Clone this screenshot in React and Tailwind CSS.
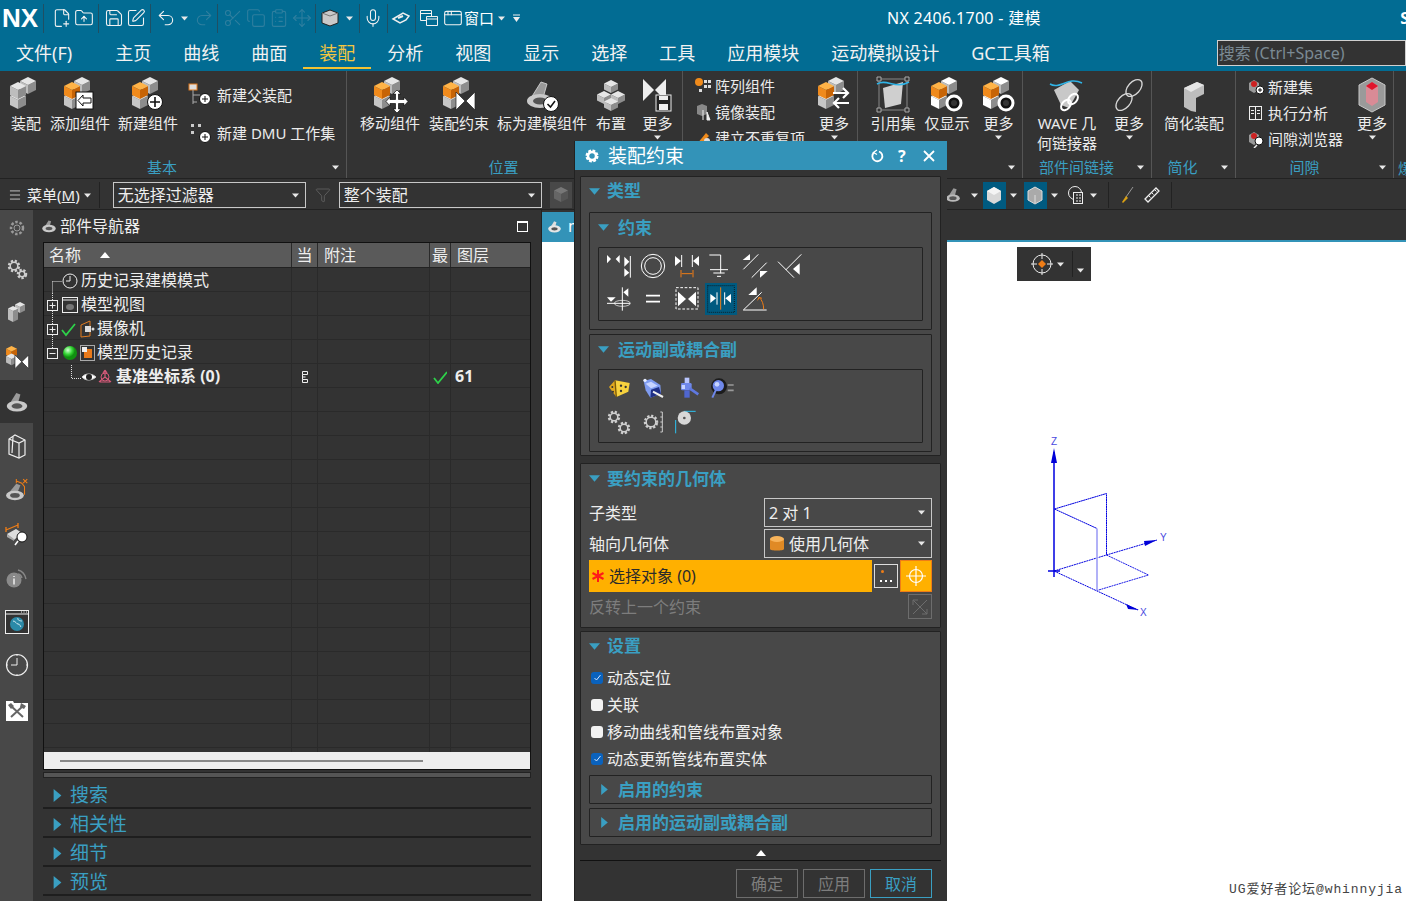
import React from 'react';
import { FilePlus2, FolderUp, Save, SquarePen, Undo2, Redo2, Scissors, Copy, ClipboardList, Move, Mic, AppWindow, Menu, Filter } from 'lucide-react';

const Tri = ({ dir = 'down', size = 10, color = '#3a9fc2', className = '' }) => (
  <svg width={size} height={size} viewBox="0 0 10 10" className={className}>
    <polygon fill={color} points={dir === 'down' ? '0,2 10,2 5,8' : dir === 'up' ? '0,8 10,8 5,2' : '2,0 8,5 2,10'} />
  </svg>
);

const Arrow = ({ className = '' }) => <Tri size={7} color="#e8e8e8" className={className} />;

const Sep = ({ className = '' }) => <div className={`w-px h-[29px] bg-[#1f4f63] ${className}`} />;

// isometric cube, x/y = left corner of top face
const Cube = ({ x, y, s = 8, h = 9, t = '#e6e6e6', l = '#bdbdbd', r = '#8d8d8d' }) => (
  <g>
    <polygon fill={l} points={`${x},${y + s / 2} ${x + s},${y + s} ${x + s},${y + s + h} ${x},${y + s / 2 + h}`} />
    <polygon fill={r} points={`${x + s},${y + s} ${x + 2 * s},${y + s / 2} ${x + 2 * s},${y + s / 2 + h} ${x + s},${y + s + h}`} />
    <polygon fill={t} points={`${x},${y + s / 2} ${x + s},${y} ${x + 2 * s},${y + s / 2} ${x + s},${y + s}`} />
  </g>
);

const Badge = ({ type }) => {
  if (type === 'plus') return <g><circle cx="26" cy="26" r="7.5" fill="#fff" stroke="#111" /><path d="M21 26h10M26 21v10" stroke="#111" strokeWidth="1.6" /></g>;
  if (type === 'add') return <g><rect x="15" y="16" width="17" height="17" fill="#fff" stroke="#111" /><path d="M30 22h-8v-3l-5 5.500 5 5.500v-3h8z" fill="#fff" stroke="#111" /></g>;
  if (type === 'move') return <path d="M26 14l4 4h-2.500v5.500H33V21l4 4.500-4 4.500v-2.500h-5.500V33H30l-4 4-4-4h2.500v-5.500H19V30l-4-4.500 4-4.500v2.500h5.500V18H22z" fill="#fff" stroke="#111" strokeWidth=".7" />;
  if (type === 'bow') return <g fill="#fff" stroke="#222" strokeWidth=".7"><polygon points="16,16 25,25 16,34" /><polygon points="35,16 26,25 35,34" /></g>;
  if (type === 'swap') return <g fill="none" stroke="#fff" strokeWidth="2.200"><path d="M18 17h15m-5-5 5 5-5 5" /><path d="M34 27H19m5-5-5 5 5 5" /></g>;
  if (type === 'ring') return <g><circle cx="26" cy="27" r="7" fill="#111" stroke="#fff" strokeWidth="3" /><circle cx="26" cy="27" r="3" fill="#333" /></g>;
  return null;
};

const Blocks = ({ orange = false, badge, white = false }) => (
  <svg width="38" height="38" viewBox="0 0 38 38">
    <Cube x={13} y={1} t={white ? '#fff' : '#e6e6e6'} />
    <Cube x={3} y={16} t={white ? '#fff' : '#e6e6e6'} l={white ? '#fff' : '#c6c6c6'} />
    {orange ? <Cube x={3} y={6} t="#ffb347" l="#f08a1c" r="#c76406" /> : <Cube x={3} y={6} />}
    <Badge type={badge} />
  </svg>
);

const Bowl = ({ check }) => (
  <svg width="38" height="38" viewBox="0 0 38 38">
    <path d="M8 22 18 6l6 2-4 14z" fill="#9a9a9a" stroke="#ddd" strokeWidth=".8" />
    <ellipse cx="17" cy="25" rx="13" ry="7" fill="#c9c9c9" />
    <ellipse cx="17" cy="25" rx="7" ry="3.500" fill="#555" />
    {check && <g><circle cx="28" cy="28" r="7.500" fill="#fff" stroke="#111" /><path d="M24.500 28l3 3 4.500-6" fill="none" stroke="#111" strokeWidth="1.500" /></g>}
  </svg>
);

const RibbonBtn = ({ icon, label, more, className = '' }) => (
  <div className={`flex flex-col items-center shrink-0 ${className}`}>
    <div className="h-[38px] flex items-center justify-center">{icon}</div>
    <div className="-mt-[1px] text-[15px] leading-[20px] whitespace-pre text-center text-[#ececec]">{label}</div>
    {more && <Arrow className="mt-[1px]" />}
  </div>
);

const MoreBtn = ({ icon, className }) => <RibbonBtn icon={icon} label="更多" more className={className} />;

const RibbonGroup = ({ label, labelClass = '', arrow = true, className = '', children }) => (
  <div className={`relative shrink-0 h-full border-r border-[#555] flex flex-col ${className}`}>
    <div className="flex h-[86px] pt-[5px]">{children}</div>
    <div className="flex items-center h-[20px]">
      <div className={`flex-1 text-center text-[15px] leading-[20px] text-[#3a9fc2] ${labelClass}`}>{label}</div>
      {arrow && <Arrow className="mr-[7px]" />}
    </div>
  </div>
);

const ListRow = ({ icon, label, className = '', iconClass = 'w-[18px] h-[18px]' }) => (
  <div className={`flex items-center gap-[3px] text-[15px] leading-[20px] whitespace-nowrap text-[#ececec] ${className}`}>
    <div className={`flex items-center justify-center shrink-0 ${iconClass}`}>{icon}</div>
    {label}
  </div>
);

const Mini = ({ children, w = 18, h = 18 }) => <svg width={w} height={h} viewBox={`0 0 ${w} ${h}`}>{children}</svg>;

const Gear = ({ cx, cy, r = 5, c = '#cfcfcf' }) => (
  <g>
    <circle cx={cx} cy={cy} r={r} fill="none" stroke={c} strokeWidth="2.500" strokeDasharray="2.200 1.600" transform={`rotate(10 ${cx} ${cy})`} />
    <circle cx={cx} cy={cy} r={r - 1.200} fill="none" stroke={c} strokeWidth="1.500" />
  </g>
);

// constraint icons, drawn in 3x coordinates around each cell's centre
const Con = ({ cx, cy, children, selected }) => (
  <div className={`w-[32px] h-[32px] shrink-0 ${selected ? 'bg-[#005a80]' : ''}`}>
    <svg width="32" height="32" viewBox={`${cx - 48} ${cy - 48} 96 96`} fill="none" stroke="#fff" strokeWidth="3">{children}</svg>
  </div>
);

const W = { fill: '#fff', stroke: 'none' };

const SectionTitle = ({ label, dir = 'down', className = '', gap = 'ml-[7px]' }) => (
  <div className={`flex items-center ${className}`}>
    <Tri dir={dir} size={11} />
    <span className={`${gap} text-[17px] leading-[22px] font-bold text-[#3a9fc2] whitespace-nowrap`}>{label}</span>
  </div>
);

const Panel = ({ className = '', children }) => <div className={`bg-[#484848] border border-[#222] rounded-[1px] ${className}`}>{children}</div>;

const Select = ({ icon, value, className = '' }) => (
  <div className={`flex items-center border border-[#c8c8c8] pl-[4px] pr-[6px] text-[16px] leading-[22px] text-[#eee] ${className}`}>
    {icon}
    <span className="flex-1 whitespace-nowrap">{value}</span>
    <Arrow />
  </div>
);

const Check = ({ checked, label }) => (
  <div className="flex items-center h-[27px] pl-[10px] text-[16px] leading-[22px] text-[#eee]">
    {checked ? (
      <div className="w-[12px] h-[12px] rounded-[3px] bg-[#0a62bd] flex items-center justify-center">
        <svg width="9" height="9" viewBox="0 0 9 9"><path d="M1.500 5l2 2 4-5" fill="none" stroke="#cfe3ff" strokeWidth="1" /></svg>
      </div>
    ) : (
      <div className="w-[12px] h-[12px] rounded-[3px] bg-[#f2f2f2]" />
    )}
    <span className="ml-[4px]">{label}</span>
  </div>
);

const DialogBtn = ({ label, active }) => (
  <div className={`w-[62px] h-[29px] border flex items-center justify-center text-[16px] leading-[22px] ${active ? 'border-[#3a9fc2] text-[#3a9fc2]' : 'border-[#6d6d6d] text-[#7d7d7d]'}`}>{label}</div>
);

const Dash = ({ d }) => <path d={d} stroke="#ddd" strokeDasharray="1 1" fill="none" />;

const Box = ({ plus }) => (
  <g>
    <rect x="4.500" y="7.500" width="10" height="10" fill="#333" stroke="#eee" />
    <path d="M6.500 12.500h6" stroke="#eee" />
    {plus && <path d="M9.500 9.500v6" stroke="#eee" />}
  </g>
);

const GreenCheck = ({ x = 0, y = 0 }) => <path d={`M${x} ${y + 6}l4 5 9-11`} fill="none" stroke="#2ed14a" strokeWidth="1.800" />;

const Row = ({ icon, w, label, bold, note, tick, layer }) => (
  <div className="flex h-[24px] shrink-0 border-b border-[#2a2a2a] text-[16px] leading-[25px] text-[#eee]">
    <div className={`w-[248px] shrink-0 border-r border-[#2a2a2a] pt-[2px] flex items-center whitespace-nowrap ${bold ? 'font-bold' : ''}`}>
      {icon && <svg width={w} height="24" viewBox={`1 0 ${w} 24`} className="shrink-0">{icon}</svg>}
      <span className={icon ? '' : 'hidden'}>{label}</span>
    </div>
    <div className="w-[26px] shrink-0 border-r border-[#2a2a2a] pt-[2px] flex items-center justify-center">{note}</div>
    <div className="w-[112px] shrink-0 border-r border-[#2a2a2a]" />
    <div className="w-[21px] shrink-0 border-r border-[#2a2a2a] pt-[2px] flex items-center justify-center">{tick && <svg width="14" height="14" viewBox="0 0 14 14"><GreenCheck x={1} y={2} /></svg>}</div>
    <div className="flex-1 pl-[4px] font-bold">{layer}</div>
  </div>
);

const Side = ({ children, className = 'h-[44px]' }) => <div className={`shrink-0 flex items-center justify-center ${className}`}>{children}</div>;

const FootRow = ({ label }) => (
  <div className="flex items-center h-[29px] pt-[3px] border-b-2 border-[#1e1e1e] pl-[8px]">
    <Tri dir="right" size={13} />
    <span className="ml-[6px] text-[19px] leading-[24px] text-[#3a9fc2]">{label}</span>
  </div>
);

export default function App() {
  const tbIcon = { size: 20, strokeWidth: 1.3 };
  const tbDim = { size: 20, strokeWidth: 1.3 };

  return (
    <div className="relative w-[1406px] h-[901px] overflow-hidden flex flex-col bg-[#333] font-['Noto_Sans','Noto_Sans_CJK_SC',sans-serif]">
      {/* title bar */}
      <div className="h-[36px] shrink-0 bg-[#026c93] flex items-center text-white">
        <div className="w-[43px] pl-[2px] text-[26px] leading-[36px] font-bold font-['Liberation_Sans',sans-serif]">NX</div>
        <Sep />
        <FilePlus2 {...tbIcon} className="ml-[8px] text-[#f2f2f2] shrink-0" />
        <FolderUp {...tbIcon} className="ml-[2px] text-[#f2f2f2] shrink-0" />
        <Sep className="ml-[4px]" />
        <Save {...tbIcon} className="ml-[5px] text-[#f2f2f2] shrink-0" />
        <SquarePen {...tbIcon} className="ml-[2px] text-[#f2f2f2] shrink-0" />
        <Sep className="ml-[4px]" />
        <Undo2 {...tbIcon} className="ml-[5px] text-[#f2f2f2] shrink-0" />
        <Arrow className="ml-[5px]" />
        <Redo2 {...tbDim} className="ml-[6px] text-[#2f7f9f] shrink-0" />
        <Sep className="ml-[3px]" />
        <Scissors {...tbDim} className="ml-[5px] text-[#2f7f9f] shrink-0" />
        <Copy {...tbDim} className="ml-[3px] text-[#2f7f9f] shrink-0" />
        <ClipboardList {...tbDim} className="ml-[3px] text-[#2f7f9f] shrink-0" />
        <Move {...tbDim} className="ml-[3px] text-[#2f7f9f] shrink-0" />
        <Sep className="ml-[3px]" />
        <svg width="20" height="20" viewBox="0 0 20 20" className="ml-[4px] shrink-0">
          <path d="M2 5 10 2l8 3v10l-8 3-8-3z" fill="#c9c9c9" stroke="#222" />
          <path d="M2 5l8 3 8-3" fill="none" stroke="#777" />
        </svg>
        <Arrow className="ml-[6px]" />
        <Sep className="ml-[6px]" />
        <Mic {...tbIcon} className="ml-[3px] text-[#f2f2f2] shrink-0" />
        <Sep className="ml-[4px]" />
        <svg width="20" height="20" viewBox="0 0 20 20" className="ml-[3px] shrink-0">
          <path d="M2 11 12 5l6 3-3 4-6 3z" fill="none" stroke="#eee" strokeWidth="1.500" />
          <path d="M7 10l5-2" stroke="#eee" strokeWidth="2" />
        </svg>
        <Sep className="ml-[4px]" />
        <svg width="20" height="20" viewBox="0 0 20 20" fill="none" stroke="#f2f2f2" className="ml-[3px] shrink-0">
          <path d="M1.500 2.500h11v10h-11zM1.500 5.500h11" />
          <path d="M7.500 8.500h11v9h-11zM7.500 11h11" fill="#026c93" />
        </svg>
        <AppWindow {...tbIcon} className="ml-[4px] text-[#f2f2f2] shrink-0" />
        <span className="ml-[1px] text-[15px] leading-[20px] whitespace-nowrap">窗口</span>
        <Arrow className="ml-[4px]" />
        <svg width="7" height="9" viewBox="0 0 7 9" className="ml-[8px]"><path d="M0 1h7" stroke="#eee" /><polygon points="0,3 7,3 3.500,8" fill="#eee" /></svg>
        <span className="ml-[367px] text-[16px] leading-[22px] tracking-[0.3px] whitespace-nowrap">NX 2406.1700 - 建模</span>
        <span className="ml-auto mr-[-3px] text-[16px] font-bold">S</span>
      </div>

      {/* menu bar */}
      <div className="h-[35px] shrink-0 bg-[#026c93] flex items-start text-[18px] leading-[35px] text-[#f2f2f2] whitespace-nowrap pl-[16px] gap-[32px]">
        <span className="mr-[11px]">文件(F)</span>
        <span>主页</span>
        <span>曲线</span>
        <span>曲面</span>
        <span className="px-[16px] -mx-[16px] h-[33px] border-b-[2px] border-[#f3c233] text-[#f3c640]">装配</span>
        <span>分析</span>
        <span>视图</span>
        <span>显示</span>
        <span>选择</span>
        <span>工具</span>
        <span>应用模块</span>
        <span>运动模拟设计</span>
        <span>GC工具箱</span>
        <div className="mt-[4px] ml-[135px] flex-1 h-[26px] bg-[#333] border border-[#d0d0d0] pl-[1px] text-[16px] leading-[24px] text-[#7b8a94]">搜索 (Ctrl+Space)</div>
      </div>

      {/* ribbon */}
      <div className="h-[107px] shrink-0 bg-[#333] flex overflow-hidden">
        <RibbonGroup label="基本" labelClass="pr-[8px]" className="w-[347px]">
          <RibbonBtn className="w-[52px]" icon={<Blocks />} label="装配" />
          <RibbonBtn className="w-[56px]" icon={<Blocks orange badge="add" />} label="添加组件" />
          <RibbonBtn className="w-[80px]" icon={<Blocks orange badge="plus" />} label="新建组件" />
          <div className="flex flex-col pt-[7px] gap-[14px]">
            <ListRow label="新建父装配" className="gap-[5px]" iconClass="w-[24px] h-[24px]" icon={<Mini w={24} h={24}><rect x="1" y="1" width="8" height="6" fill="#ddd" stroke="#e07a1f" /><path d="M5 7v14M5 12h7M5 19h4" stroke="#aaa" /><circle cx="17" cy="16" r="5.500" fill="#fff" stroke="#111" /><path d="M14 16h6M17 13v6" stroke="#111" /></Mini>} />
            <ListRow label="新建 DMU 工作集" className="gap-[5px]" iconClass="w-[24px] h-[24px]" icon={<Mini w={24} h={24}><path d="M3 3h3v3H3zM10 3h3v3h-3zM3 10h3v3H3z" fill="#ccc" /><circle cx="17" cy="16" r="5.500" fill="#fff" stroke="#111" /><path d="M14 16h6M17 13v6" stroke="#111" /></Mini>} />
          </div>
        </RibbonGroup>
        <RibbonGroup label="位置" labelClass="pr-[22px]" arrow={false} className="w-[336px]">
          <RibbonBtn className="w-[68px] ml-[9px]" icon={<Blocks orange badge="move" />} label="移动组件" />
          <RibbonBtn className="w-[70px]" icon={<Blocks orange badge="bow" />} label="装配约束" />
          <RibbonBtn className="w-[96px]" icon={<Bowl check />} label="标为建模组件" />
          <RibbonBtn className="w-[42px]" icon={<svg width="30" height="34" viewBox="0 0 30 34"><Cube x={8} y={2} s={7} h={6} /><Cube x={1} y={13} s={7} h={6} /><Cube x={15} y={13} s={7} h={6} /><Cube x={8} y={20} s={7} h={6} /></svg>} label="布置" />
          <MoreBtn className="w-[51px]" icon={<svg width="32" height="34" viewBox="0 0 32 34"><polygon points="1,1 12,12 1,23" fill="#eee" /><polygon points="24,1 13,12 24,23" fill="#eee" /><rect x="14" y="17" width="15" height="16" fill="#222" stroke="#eee" /><path d="M17 18h9v4h-9zM17 26h9v6h-9z" fill="#eee" /></svg>} />
        </RibbonGroup>
        <RibbonGroup label="" className="w-[175px]">
          <div className="w-[129px] flex flex-col pl-[11px] gap-[6px]">
            <ListRow label="阵列组件" icon={<Mini><circle cx="5" cy="5" r="4" fill="#ef8a1b" /><path d="M10 3h3v3h-3zM14 3h3v3h-3zM10 8h3v3h-3zM14 8h3v3h-3zM5 12h3v3H5z" fill="#ddd" /></Mini>} />
            <ListRow label="镜像装配" icon={<Mini><path d="M3 3l5-2 5 2v8l-5 2-5-2z" fill="#888" /><path d="M9 7v10M13 17V9l3 8z" stroke="#eee" fill="#eee" /></Mini>} />
            <ListRow label="建立不重复项" icon={<Mini><path d="M3 15 12 4l3 3-9 9z" fill="#ef8a1b" /><circle cx="13" cy="12" r="3" fill="#ddd" /></Mini>} />
          </div>
          <MoreBtn className="w-[46px]" icon={<Blocks orange badge="swap" />} />
        </RibbonGroup>
        <RibbonGroup label="" className="w-[165px]">
          <RibbonBtn className="w-[54px] ml-[8px]" icon={<svg width="36" height="38" viewBox="0 0 36 38"><rect x="4" y="3" width="28" height="31" fill="none" stroke="#888" /><path d="M8 12 28 6l-2 22-16 4z" fill="#cfcfcf" /><path d="M2 8c10-6 18 6 32-2" fill="none" stroke="#2fb3e6" strokeWidth="1.500" /><path d="M2 1h4v4H2zM30 1h4v4h-4zM2 32h4v4H2zM30 32h4v4h-4z" fill="#333" stroke="#aaa" /></svg>} label="引用集" />
          <RibbonBtn className="w-[54px]" icon={<Blocks orange white badge="ring" />} label="仅显示" />
          <MoreBtn className="w-[49px]" icon={<Blocks orange white badge="ring" />} />
        </RibbonGroup>
        <RibbonGroup label="部件间链接" labelClass="pr-[7px]" className="w-[129px]">
          <RibbonBtn className="w-[78px] ml-[5px]" icon={<svg width="38" height="38" viewBox="0 0 38 38"><path d="M6 14 22 5l9 9-10 18-8-3z" fill="#c8c8c8" /><path d="M2 8c10 6 18-8 32-1" fill="none" stroke="#2fb3e6" strokeWidth="1.500" /><g fill="none" stroke="#fff" strokeWidth="2"><ellipse cx="18" cy="29" rx="4" ry="6" transform="rotate(40 18 29)" /><ellipse cx="25" cy="23" rx="4" ry="6" transform="rotate(40 25 23)" /></g></svg>} label={'WAVE 几\n何链接器'} />
          <MoreBtn className="w-[46px]" icon={<svg width="32" height="36" viewBox="0 0 32 36" fill="none" stroke="#d8d8d8" strokeWidth="1.300"><ellipse cx="11" cy="25" rx="6" ry="10" transform="rotate(42 11 25)" /><ellipse cx="21" cy="11" rx="6" ry="10" transform="rotate(42 21 11)" /></svg>} />
        </RibbonGroup>
        <RibbonGroup label="简化" labelClass="pr-[8px]" className="w-[84px]">
          <RibbonBtn className="w-[84px]" icon={<svg width="26" height="38" viewBox="0 0 26 38"><path d="M3 12 16 6l7 3v9l-8 4v14l-5-1-7-4z" fill="#bdbdbd" /><path d="M3 12l7 4 13-7-7-3z" fill="#e5e5e5" /></svg>} label="简化装配" />
        </RibbonGroup>
        <RibbonGroup label="间隙" labelClass="pr-[6px]" className="w-[158px]">
          <div className="w-[116px] flex flex-col pl-[11px] pt-[1px] gap-[6px]">
            <ListRow label="新建集" icon={<Mini><path d="M2 5l5-3 5 3v7l-5 3-5-3z" fill="#999" /><circle cx="7" cy="6" r="3" fill="#c22" /><circle cx="13" cy="12" r="4" fill="#fff" stroke="#111" /><path d="M11 12h4M13 10v4" stroke="#111" /></Mini>} />
            <ListRow label="执行分析" icon={<Mini><rect x="2.500" y="2.500" width="12" height="13" fill="none" stroke="#eee" /><path d="M8.500 3v12M4 6.500h3M4 9.500h3M10 6.500h3M10 9.500h3" stroke="#eee" /></Mini>} />
            <ListRow label="间隙浏览器" icon={<Mini><path d="M2 5l5-3 5 3v7l-5 3-5-3z" fill="#999" /><circle cx="7" cy="6" r="3" fill="#c22" /><circle cx="12" cy="11" r="4" fill="#fff" stroke="#111" /><path d="M10 15l-3 3" stroke="#eee" strokeWidth="1.500" /></Mini>} />
          </div>
          <MoreBtn className="w-[42px]" icon={<svg width="34" height="38" viewBox="0 0 34 38"><path d="M4 9 17 2l13 7v20l-13 7-13-7z" fill="#9a9a9a" stroke="#c8c8c8" /><path d="M11 10l6-4 6 4v16l-6 4-6-4z" fill="#d98b96" /><path d="M11 10l6-4 6 4-6 4z" fill="#e0142c" /></svg>} />
        </RibbonGroup>
        <div className="flex-1 flex items-end pl-[4px] text-[15px] leading-[20px] text-[#3a9fc2] whitespace-nowrap">爆</div>
      </div>

      {/* selection bar */}
      <div className="h-[32px] shrink-0 bg-[#333] border-t border-b border-[#222] pt-[2px] flex items-center text-[15px] leading-[20px] text-[#eee]">
        <Menu size={14} strokeWidth={1.3} className="ml-[8px] shrink-0" />
        <span className="ml-[5px] whitespace-nowrap">菜单(<span className="underline">M</span>)</span>
        <Arrow className="ml-[4px]" />
        <div className="ml-[8px] w-px h-[26px] bg-[#222]" />
        <Select value="无选择过滤器" className="ml-[13px] w-[193px] h-[26px] pl-[3px]" />
        <Filter size={16} strokeWidth={1.2} className="ml-[9px] text-[#666] shrink-0" />
        <Select value="整个装配" className="ml-[8px] w-[203px] h-[26px] pl-[2px]" />
        <div className="ml-[8px] w-[22px] h-[26px] bg-[#484848] flex items-center justify-center"><svg width="16" height="18" viewBox="0 0 16 18"><Cube x={1} y={1} s={7} h={8} t="#777" l="#666" r="#555" /></svg></div>
        <svg width="20" height="20" viewBox="0 0 38 38" className="ml-[372px] shrink-0"><path d="M8 22 18 6l6 2-4 14z" fill="#9a9a9a" /><ellipse cx="17" cy="25" rx="13" ry="7" fill="#bbb" /><ellipse cx="17" cy="25" rx="7" ry="3.500" fill="#555" /></svg>
        <Arrow className="ml-[7px]" />
        <div className="ml-[5px] w-[23px] h-[27px] bg-[#005a80] flex items-center justify-center"><svg width="16" height="20" viewBox="0 0 16 20"><path d="M1 6l7-4 7 4v9l-7 4-7-4z" fill="#d8d8d8" /><path d="M1 6l7-4 7 4-7 4z" fill="#f4f4f4" /></svg></div>
        <Arrow className="ml-[4px]" />
        <div className="ml-[7px] w-[23px] h-[27px] bg-[#005a80] flex items-center justify-center"><svg width="16" height="20" viewBox="0 0 16 20"><path d="M1 6l7-4 7 4v9l-7 4-7-4z" fill="#aaa" stroke="#ddd" /><path d="M8 10v8" stroke="#ddd" /></svg></div>
        <Arrow className="ml-[4px]" />
        <svg width="18" height="20" viewBox="0 0 18 20" className="ml-[9px] shrink-0" fill="none" stroke="#eee"><circle cx="8" cy="8" r="6.500" /><rect x="6.500" y="7.500" width="9" height="11" fill="#333" /><path d="M9 10h2M12 10h2M9 13h2M12 13h2M9 16h2M12 16h2" /></svg>
        <Arrow className="ml-[5px]" />
        <div className="ml-[11px] w-px h-[26px] bg-[#222]" />
        <svg width="16" height="18" viewBox="0 0 16 18" className="ml-[10px] shrink-0"><path d="M14 1 7 11" stroke="#999" /><path d="M7 10l2 2-5 5-1-1z" fill="#d9a013" /></svg>
        <svg width="20" height="20" viewBox="0 0 20 20" className="ml-[7px] shrink-0"><path d="M3 14 14 3l3 3L6 17z" fill="none" stroke="#eee" strokeWidth="1.300" /><path d="M7 11l1.500 1.500M10 8l1.500 1.500M13 5l1.500 1.500" stroke="#eee" /></svg>
        <div className="ml-[9px] w-px h-[26px] bg-[#222]" />
      </div>

      {/* main */}
      <div className="flex-1 min-h-0 flex">
        {/* left tab strip */}
        <div className="w-[33px] shrink-0 bg-[#484848] flex flex-col items-stretch">
          <Side className="h-[36px]"><svg width="20" height="20" viewBox="0 0 20 20"><circle cx="10" cy="10" r="6" fill="none" stroke="#9a9a9a" strokeWidth="2.500" strokeDasharray="2.500 1.800" /><circle cx="10" cy="10" r="3" fill="none" stroke="#9a9a9a" /></svg></Side>
          <Side className="h-[46px]"><svg width="24" height="24" viewBox="0 0 24 24"><Gear cx={9} cy={9} r={5} /><Gear cx={17} cy={17} r={4} /></svg></Side>
          <Side><svg width="22" height="26" viewBox="0 0 22 26"><Cube x={9} y={1} s={5} h={6} /><Cube x={2} y={10} s={5} h={6} /><Cube x={2} y={5} s={5} h={6} /></svg></Side>
          <Side className="h-[42px]"><svg width="28" height="26" viewBox="0 0 38 38"><Cube x={3} y={3} t="#ffb347" l="#f08a1c" r="#c76406" /><Cube x={3} y={14} /><g fill="#fff" stroke="#222"><polygon points="16,16 26,26 16,36" /><polygon points="36,16 26,26 36,36" /></g></svg></Side>
          <Side className="h-[43px] bg-[#333] mt-[2px]"><svg width="26" height="26" viewBox="0 0 38 38"><path d="M8 22 18 6l6 2-4 14z" fill="#9a9a9a" /><ellipse cx="19" cy="25" rx="15" ry="8" fill="#c9c9c9" /><ellipse cx="19" cy="25" rx="8" ry="4" fill="#555" /></svg></Side>
          <Side className="h-[46px]"><svg width="20" height="26" viewBox="0 0 20 26" fill="none" stroke="#eee" strokeWidth="1.200"><path d="M2 6v15l10 4 6-3V7L8 2z" /><path d="M2 6l10 4 6-3M12 10v15M6 4l-1 16" /></svg></Side>
          <Side className="h-[42px]"><svg width="26" height="26" viewBox="0 0 38 38"><path d="M8 22 18 10l6 2-4 10z" fill="#9a9a9a" /><ellipse cx="16" cy="27" rx="13" ry="7" fill="#c9c9c9" /><ellipse cx="16" cy="27" rx="7" ry="3.500" fill="#555" /><path d="M18 6l8 3 4 5v12M28 3l6 6M34 3l-6 6M18 3v6" stroke="#ef7d16" strokeWidth="1.500" fill="none" /></svg></Side>
          <Side className="h-[48px]"><svg width="26" height="24" viewBox="0 0 26 24"><path d="M3 11l9-5 6 4-8 7z" fill="#ddd" /><path d="M3 11v3l7 4v-2z" fill="#aaa" /><circle cx="18" cy="14" r="5" fill="#fff" stroke="#111" /><path d="M14 18l-3 4" stroke="#fff" strokeWidth="1.500" /><path d="M2 7l12-5M2 4v5M14 0v5" stroke="#ef7d16" strokeWidth="1.300" fill="none" /></svg></Side>
          <Side className="h-[38px]"><svg width="24" height="24" viewBox="0 0 24 24"><circle cx="9" cy="14" r="7.500" fill="#8a8a8a" /><path d="M9 10v1M9 12.500v6" stroke="#eee" strokeWidth="1.500" /><path d="M13 4c4 1 7 4 8 9M13 8c2 .5 3.500 2 4 4" stroke="#888" strokeWidth="1.300" fill="none" /></svg></Side>
          <Side className="h-[50px]"><svg width="24" height="24" viewBox="0 0 24 24"><rect x=".5" y=".5" width="23" height="23" fill="#333" stroke="#eee" /><path d="M1 4h22" stroke="#eee" /><path d="M16 2h1M18.500 2h1M21 2h1" stroke="#eee" /><circle cx="12" cy="14" r="7" fill="#2b8aa8" /><path d="M8 11c3 0 3 3 5 3s2 2 3 3M13 8c-1 2 2 3 4 3" stroke="#cfe9f2" fill="none" /></svg></Side>
          <Side className="h-[36px]"><svg width="24" height="24" viewBox="0 0 24 24" fill="none" stroke="#eee"><circle cx="12" cy="12" r="10.500" strokeWidth="1.200" /><path d="M12 5v7H6M12 1v2M12 21v2M1 12h2M21 12h2" /></svg></Side>
          <Side className="h-[54px]"><svg width="24" height="24" viewBox="0 0 24 24"><path d="M1 3h7l1 2h14v18H1z" fill="#fff" /><path d="M6 8l12 11M18 8 6 19" stroke="#666" strokeWidth="2" /><path d="M3 7l3-2 3 3-3 3zM16 5l5 3-2 3-4-2z" fill="#666" /></svg></Side>
        </div>

        {/* part navigator */}
        <div className="w-[509px] shrink-0 bg-[#333] border-r border-[#222] flex flex-col pl-[10px] pr-[10px]">
          <div className="h-[32px] shrink-0 flex items-center text-[16px] leading-[22px] text-[#eee]">
            <svg width="16" height="16" viewBox="0 0 38 38" className="-ml-[2px] shrink-0"><path d="M8 22 18 6l6 2-4 14z" fill="#9a9a9a" /><ellipse cx="19" cy="25" rx="16" ry="9" fill="#c9c9c9" /><ellipse cx="19" cy="25" rx="8" ry="4" fill="#555" /></svg>
            <span className="ml-[3px]">部件导航器</span>
            <div className="ml-auto mr-[3px] w-[11px] h-[11px] border border-white border-t-2" />
          </div>
          <div className="h-[528px] shrink-0 border border-[#111] flex flex-col overflow-hidden">
            <div className="h-[25px] shrink-0 flex bg-[#5a5a5a] text-[16px] leading-[24px] text-[#eee] border-b border-[#222]">
              <div className="w-[248px] shrink-0 border-r border-[#2a2a2a] pl-[5px] flex items-center">名称<Tri dir="up" size={10} color="#fff" className="ml-[19px]" /></div>
              <div className="w-[26px] shrink-0 border-r border-[#2a2a2a] text-center">当</div>
              <div className="w-[112px] shrink-0 border-r border-[#2a2a2a] pl-[6px]">附注</div>
              <div className="w-[21px] shrink-0 border-r border-[#2a2a2a] text-center overflow-hidden">最</div>
              <div className="flex-1 pl-[6px]">图层</div>
            </div>
            <div className="flex-1 min-h-0 flex flex-col overflow-hidden">
              <Row w={37} label="历史记录建模模式" icon={<g><Dash d="M9.500 12.500V24M9.500 12.500H19" /><circle cx="27" cy="12" r="7" fill="none" stroke="#eee" /><path d="M27 7v5h-4" stroke="#eee" fill="none" /></g>} />
              <Row w={37} label="模型视图" icon={<g><Dash d="M9.500 0v24" /><Box plus /><rect x="19.500" y="4.500" width="15" height="15" fill="none" stroke="#eee" /><path d="M20 7h14" stroke="#eee" /><ellipse cx="27" cy="14" rx="4" ry="3" fill="#777" /></g>} />
              <Row w={53} label="摄像机" icon={<g><Dash d="M9.500 0v24" /><Box plus /><GreenCheck x={19} y={7} /><path d="M38 8l9-4v15l-9 1z" fill="none" stroke="#e07a1f" /><rect x="42" y="9" width="6" height="6" fill="#ddd" /><circle cx="50" cy="12" r="1.500" fill="#ddd" /></g>} />
              <Row w={53} label="模型历史记录" icon={<g><defs><radialGradient id="ball" cx="35%" cy="30%"><stop offset="0%" stopColor="#d8ffd8" /><stop offset="60%" stopColor="#38d838" /><stop offset="100%" stopColor="#109010" /></radialGradient></defs><Dash d="M9.500 0v8" /><Box /><circle cx="27" cy="12" r="7" fill="url(#ball)" /><rect x="37.500" y="4.500" width="14" height="15" fill="none" stroke="#aaa" /><rect x="41" y="8" width="8" height="9" fill="#e8791a" /><rect x="39" y="6" width="5" height="5" fill="#eee" /></g>} />
              <Row w={72} bold label="基准坐标系 (0)" layer="61" tick note={<svg width="8" height="14" viewBox="0 0 8 14" fill="none" stroke="#eee"><path d="M1.500 1.500h5v3h-5zM1.500 9.500h5v3h-5zM1.500 4.500v5M1.500 7h3" /></svg>} icon={<g><Dash d="M28.500 0v13.500H39" /><path d="M39 12c3-4 10-4 14 0-4 4-11 4-14 0z" fill="#fff" stroke="#ccc" /><circle cx="46" cy="12" r="3" fill="#222" /><path d="M62 5v7l-6 5m6-5 6 5M57 17h10M62 5l-2 3M62 5l2 3" stroke="#d65a7a" strokeWidth="1.200" fill="none" /><circle cx="62" cy="12" r="4" fill="none" stroke="#d65a7a" /></g>} />
              {Array.from({ length: 16 }).map((_, i) => <Row key={i} />)}
            </div>
            <div className="h-[17px] shrink-0 bg-[#eee] flex items-center pl-[16px]">
              <div className="w-[363px] h-[2px] bg-[#888]" />
            </div>
          </div>
          <div className="mt-[2px] mb-[2px] h-[6px] shrink-0 bg-[#555] border border-[#222]" />
          <FootRow label="搜索" />
          <FootRow label="相关性" />
          <FootRow label="细节" />
          <FootRow label="预览" />
        </div>

        {/* graphics area */}
        <div className="flex-1 min-w-0 flex flex-col">
          <div className="h-[32px] shrink-0 bg-[#333] flex items-end border-b-2 border-[#3393b8]">
            <div className="w-[34px] h-[28px] bg-[#3393b8] flex items-center pl-[5px] text-[16px] text-white overflow-hidden">
              <svg width="15" height="15" viewBox="0 0 38 38" className="shrink-0"><path d="M8 22 18 6l6 2-4 14z" fill="#ddd" /><ellipse cx="19" cy="25" rx="16" ry="9" fill="#e6e6e6" /><ellipse cx="19" cy="25" rx="8" ry="4" fill="#555" /></svg>
              <span className="ml-[6px]">m</span>
            </div>
          </div>
          <div className="relative flex-1 bg-white">
            {/* view triad */}
            <svg className="absolute left-0 top-0" width="864" height="659" viewBox="542 242 864 659">
              <g fill="none" stroke="#0000e0">
                <path d="M1054 452v125M1048 571h12" strokeWidth="1.500" />
                <path d="M1054 571 1106.500 555 1157 540M1054 571 1138 610" strokeDasharray="2 .6" />
                <path d="M1054.500 509 1106.500 493.500V555M1054.500 509 1097 528.500" strokeDasharray="2 .3" />
                <path d="M1106.500 555 1148.500 575 1097 590.500" strokeDasharray="2 .6" stroke="#2020e8" />
                <path d="M1097 528.500V590.500" stroke="#a9a9f7" strokeWidth="1.800" />
              </g>
              <polygon points="1054,448 1051,463 1057,463" fill="#0000d8" />
              <polygon points="1157,540 1144,541 1145,546" fill="#0000d8" />
              <polygon points="1139,610 1126,604 1128,609" fill="#0000d8" />
              <g fill="#4a4ae0" fontSize="10" fontFamily="'Liberation Sans', sans-serif">
                <text x="1051" y="445">Z</text>
                <text x="1160" y="541">Y</text>
                <text x="1140" y="616">X</text>
              </g>
            </svg>
            {/* floating snap toolbar */}
            <div className="absolute left-[475px] top-[5px] w-[74px] h-[34px] bg-[#333] flex items-center">
              <svg width="24" height="24" viewBox="0 0 24 24" className="ml-[13px]" fill="none" stroke="#eee">
                <circle cx="12" cy="12" r="9" />
                <path d="M12 1v6M12 17v6M1 12h6M17 12h6" />
                <polygon points="12,8 16,12 12,16 8,12" fill="#ef7d16" stroke="none" />
              </svg>
              <Arrow className="ml-[3px]" />
              <div className="ml-[8px] w-px h-[26px] bg-[#222]" />
              <Arrow className="ml-[4px] mt-[12px]" />
            </div>
            <div className="absolute right-[3px] bottom-[2px] text-[13px] leading-[18px] tracking-[0.9px] text-[#444] font-['Liberation_Mono','Noto_Sans_CJK_SC',monospace]">UG爱好者论坛@whinnyjia</div>
          </div>
        </div>
      </div>

      {/* assembly constraints dialog */}
      <div className="absolute left-[574px] top-[141px] w-[373px] h-[760px] bg-[#333] border-l border-[#222] flex flex-col">
        <div className="h-[29px] shrink-0 bg-[#3393b8] flex items-center text-white">
          <svg width="16" height="16" viewBox="0 0 16 16" className="ml-[9px] shrink-0"><circle cx="8" cy="8" r="5" fill="none" stroke="#fff" strokeWidth="3" strokeDasharray="2.600 1.300" /><circle cx="8" cy="8" r="4" fill="none" stroke="#fff" strokeWidth="2.500" /></svg>
          <span className="ml-[8px] text-[19px] leading-[24px]">装配约束</span>
          <svg width="14" height="14" viewBox="0 0 14 14" className="ml-[186px]" fill="none" stroke="#fff" strokeWidth="1.800"><path d="M4 3.500A5 5 0 1 0 9 2.500" /><path d="M7 1 3.500 3.500 7 5.500" strokeWidth="1.300" /></svg>
          <span className="ml-[14px] text-[16px] leading-[20px] font-bold">?</span>
          <svg width="12" height="12" viewBox="0 0 12 12" className="ml-[17px]" stroke="#fff" strokeWidth="1.800"><path d="M1 1l10 10M11 1 1 11" /></svg>
        </div>

        <div className="pl-[5px] pr-[5px] flex flex-col">
          <Panel className="mt-[6px] mr-[1px] h-[280px] flex flex-col">
            <SectionTitle label="类型" className="h-[28px] pl-[8px]" />
            <Panel className="mx-[8px] mt-[7px] h-[118px] shrink-0">
              <SectionTitle label="约束" gap="ml-[9px]" className="h-[29px] pl-[8px]" />
              <Panel className="mx-[8px] mt-[5px] h-[74px] pl-[4px] pt-[2px] flex flex-col">
                <div className="flex gap-[2px]">
                  <Con cx={132} cy={168}>
                    <polygon {...W} points="96,135 108,147 96,160" /><polygon {...W} points="134,135 122,147 134,160" />
                    <polygon {...W} points="148,140 163,155 148,170" /><polygon {...W} points="148,175 163,188 148,200" /><path d="M166 138v65" />
                  </Con>
                  <Con cx={234} cy={168}><circle cx="234" cy="168" r="35" /><circle cx="234" cy="168" r="25" /></Con>
                  <Con cx={336} cy={168}>
                    <polygon {...W} points="300,138 318,153 300,168" /><polygon {...W} points="372,138 354,153 372,168" /><path d="M320 135v36M352 135v36" />
                    <path d="M318 180v22M354 180v22M320 191h32" stroke="#ef7d16" />
                  </Con>
                  <Con cx={438} cy={168}><path d="M403 135h34v55M405 179h54M415 189h34M426 199h12" /></Con>
                  <Con cx={540} cy={168}>
                    <polygon {...W} points="503,150 525,132 525,150" /><path d="M505 178l45-45M530 203l45-45" /><polygon {...W} points="555,183 578,183 555,203" />
                  </Con>
                  <Con cx={640} cy={168}><path d="M607 155l48 48M677 133l-47 47" /><polygon {...W} points="672,160 672,194 652,177" /></Con>
                </div>
                <div className="flex gap-[2px] mt-[1px]">
                  <Con cx={132} cy={270}>
                    <polygon {...W} points="96,265 122,265 108,278" /><polygon {...W} points="160,238 160,263 145,250" /><path d="M142 235v70M96 283h69" /><ellipse cx="142" cy="283" rx="24" ry="9" strokeWidth="2" />
                  </Con>
                  <Con cx={234} cy={270}><path d="M213 260h42M213 278h42" strokeWidth="5" /></Con>
                  <Con cx={335} cy={270}><rect x="302" y="236" width="66" height="64" strokeDasharray="8 5" /><polygon {...W} points="308,248 332,270 308,292" /><polygon {...W} points="362,248 338,270 362,292" /></Con>
                  <Con cx={437} cy={270} selected>
                    <rect x="397" y="230" width="80" height="80" strokeDasharray="2.500 3.500" stroke="#111" />
                    <polygon {...W} points="405,255 422,268 405,282" /><polygon {...W} points="467,255 450,268 467,282" /><path d="M425 250v37M448 250v37" /><path d="M436 235v67" stroke="#ef7d16" />
                  </Con>
                  <Con cx={540} cy={270}>
                    <polygon {...W} points="520,258 545,235 545,258" /><path d="M505 303l55-53M505 303h70" /><path d="M552 265c10 8 14 22 14 36M548 274l4-9 9 3" stroke="#ef7d16" />
                  </Con>
                </div>
              </Panel>
            </Panel>
            <Panel className="mx-[8px] mt-[4px] h-[118px] shrink-0">
              <SectionTitle label="运动副或耦合副" gap="ml-[9px]" className="h-[29px] pl-[8px]" />
              <Panel className="mx-[8px] mt-[5px] h-[74px] pl-[4px] pt-[3px] flex flex-col">
                <div className="flex gap-[2px]">
                  <Con cx={0} cy={0}>
                    <g stroke="none">
                      <polygon points="-30,-6 -12,-26 -8,24" fill="#e0a81e" /><polygon points="-12,-26 32,-18 28,8 -8,24" fill="#f7d23e" />
                      <path d="M-12 -26-8 24" stroke="#7a5a08" strokeWidth="4" /><circle cx="6" cy="-10" r="3.500" fill="#333" /><circle cx="20" cy="-6" r="3.500" fill="#333" /><circle cx="6" cy="6" r="3.500" fill="#333" /><circle cx="-20" cy="-6" r="3" fill="#333" /><circle cx="-18" cy="8" r="3" fill="#333" />
                    </g>
                  </Con>
                  <Con cx={0} cy={0}>
                    <g stroke="none">
                      <polygon points="-28,-24 -6,-30 22,-12 24,14 -8,26 -22,4" fill="#7f9cf0" /><polygon points="-22,-16 -6,-22 14,-10 -6,-2" fill="#c7d4ff" /><polygon points="-6,2 18,-6 24,14 -8,26" fill="#1f2f86" />
                      <path d="M0 8 30 24" stroke="#eee" strokeWidth="6" /><circle cx="-24" cy="-26" r="5" fill="#e8eeff" />
                    </g>
                  </Con>
                  <Con cx={0} cy={0}>
                    <g stroke="none">
                      <rect x="-7" y="-34" width="14" height="16" fill="#b9c6ff" /><rect x="-18" y="-18" width="32" height="22" rx="4" fill="#6f88ea" /><rect x="-16" y="-12" width="10" height="12" fill="#c7d4ff" /><rect x="-8" y="4" width="16" height="22" fill="#4f66cf" />
                      <path d="M8 -2 34 16" stroke="#5f78e0" strokeWidth="8" />
                    </g>
                  </Con>
                  <Con cx={0} cy={0}>
                    <g stroke="none">
                      <circle cx="-6" cy="-8" r="24" fill="#1c1c1c" /><circle cx="-8" cy="-10" r="17" fill="#6f88ea" /><circle cx="-12" cy="-14" r="7" fill="#c7d4ff" />
                      <path d="M-12 -4-26 26" stroke="#6f88ea" strokeWidth="6" /><path d="M20 -12h18M20 4h18" stroke="#999" strokeWidth="5" />
                    </g>
                  </Con>
                </div>
                <div className="flex gap-[2px] mt-[1px]">
                  <Con cx={0} cy={0}><g transform="scale(3)"><Gear cx={-5} cy={-5} r={5} /><Gear cx={5} cy={6} r={5} /></g></Con>
                  <Con cx={0} cy={0}><g transform="scale(3)"><Gear cx={-2} cy={0} r={6} /></g><path d="M22 -30h6v60h-6M22 -15h6M22 0h6M22 15h6" strokeWidth="3" stroke="#ccc" /></Con>
                  <Con cx={0} cy={0}>
                    <path d="M-34 34V-6M-10 -32h36" stroke="#2ec2f0" />
                    <circle cx="-8" cy="-12" r="20" fill="#d8d8d8" stroke="none" /><circle cx="-8" cy="-12" r="4" fill="#555" stroke="none" />
                  </Con>
                </div>
              </Panel>
            </Panel>
          </Panel>

          <Panel className="mt-[7px] mr-[1px] h-[165px] flex flex-col">
            <SectionTitle label="要约束的几何体" className="h-[29px] pl-[8px]" />
            <div className="mt-[5px] pl-[8px] pr-[8px] flex flex-col">
              <div className="flex items-center h-[29px] text-[16px] leading-[22px] text-[#eee]">
                <span>子类型</span>
                <Select value="2 对 1" className="ml-auto w-[168px] h-[29px]" />
              </div>
              <div className="flex items-center h-[29px] mt-[2px] text-[16px] leading-[22px] text-[#eee]">
                <span>轴向几何体</span>
                <Select value="使用几何体" className="ml-auto w-[168px] h-[29px]" icon={<svg width="16" height="18" viewBox="0 0 16 18" className="mr-[4px] shrink-0"><path d="M1 4v10c0 2 14 2 14 0V4z" fill="#e08a25" /><ellipse cx="8" cy="4" rx="7" ry="3" fill="#f7b35a" /></svg>} />
              </div>
              <div className="flex h-[32px] mt-[2px]">
                <div className="w-[283px] bg-[#ffb000] flex items-center text-[16px] leading-[22px] text-[#2a2a2a]">
                  <svg width="14" height="14" viewBox="0 0 14 14" className="ml-[2px] shrink-0" stroke="#ff1a1a" strokeWidth="2"><path d="M7 1v12M1.500 4l11 6M12.500 4l-11 6" /></svg>
                  <span className="ml-[4px] whitespace-nowrap">选择对象 (0)</span>
                </div>
                <div className="ml-[2px] mt-[4px] w-[24px] h-[24px] border border-[#ddd] relative shrink-0">
                  <div className="absolute left-[6px] top-[5px] w-[3px] h-[3px] rounded-full bg-[#ef7d16]" />
                  <div className="absolute left-[5px] bottom-[5px] flex gap-[3px]"><div className="w-[2px] h-[2px] bg-white" /><div className="w-[2px] h-[2px] bg-white" /><div className="w-[2px] h-[2px] bg-white" /></div>
                </div>
                <div className="ml-[2px] w-[32px] h-[32px] bg-[#ffb000] border border-[#ef7d16] flex items-center justify-center shrink-0">
                  <svg width="22" height="22" viewBox="0 0 22 22" fill="none" stroke="#fff" strokeWidth="1.200"><circle cx="11" cy="11" r="6.500" /><path d="M11 1v20M1 11h20" /></svg>
                </div>
              </div>
              <div className="flex items-center h-[25px] mt-[2px] text-[16px] leading-[22px] text-[#7d7d7d]">
                <span>反转上一个约束</span>
                <div className="ml-auto w-[24px] h-[25px] border border-[#6d6d6d] flex items-center justify-center">
                  <svg width="18" height="18" viewBox="0 0 18 18" stroke="#6d6d6d" fill="none"><path d="M2 2l14 14M16 2 2 16M2 7V2h5M11 16h5v-5" /></svg>
                </div>
              </div>
            </div>
          </Panel>

          <Panel className="mt-[3px] mr-[1px] h-[214px] flex flex-col">
            <SectionTitle label="设置" className="h-[28px] pl-[8px]" />
            <div className="mt-[4px]">
              <Check checked label="动态定位" />
              <Check label="关联" />
              <Check label="移动曲线和管线布置对象" />
              <Check checked label="动态更新管线布置实体" />
            </div>
            <Panel className="mx-[8px] mt-[3px] h-[29px] shrink-0 flex items-center">
              <SectionTitle dir="right" gap="ml-[8px]" label="启用的约束" className="pl-[9px]" />
            </Panel>
            <Panel className="mx-[8px] mt-[4px] h-[29px] shrink-0 flex items-center">
              <SectionTitle dir="right" gap="ml-[8px]" label="启用的运动副或耦合副" className="pl-[9px]" />
            </Panel>
          </Panel>

          <div className="h-[15px] flex items-center justify-center shrink-0"><Tri dir="up" size={10} color="#fff" /></div>
          <div className="h-px mr-[1px] bg-[#111] shrink-0" />
          <div className="flex justify-end gap-[5px] mt-[8px] pr-[10px]">
            <DialogBtn label="确定" />
            <DialogBtn label="应用" />
            <DialogBtn active label="取消" />
          </div>
        </div>
      </div>
    </div>
  );
}
